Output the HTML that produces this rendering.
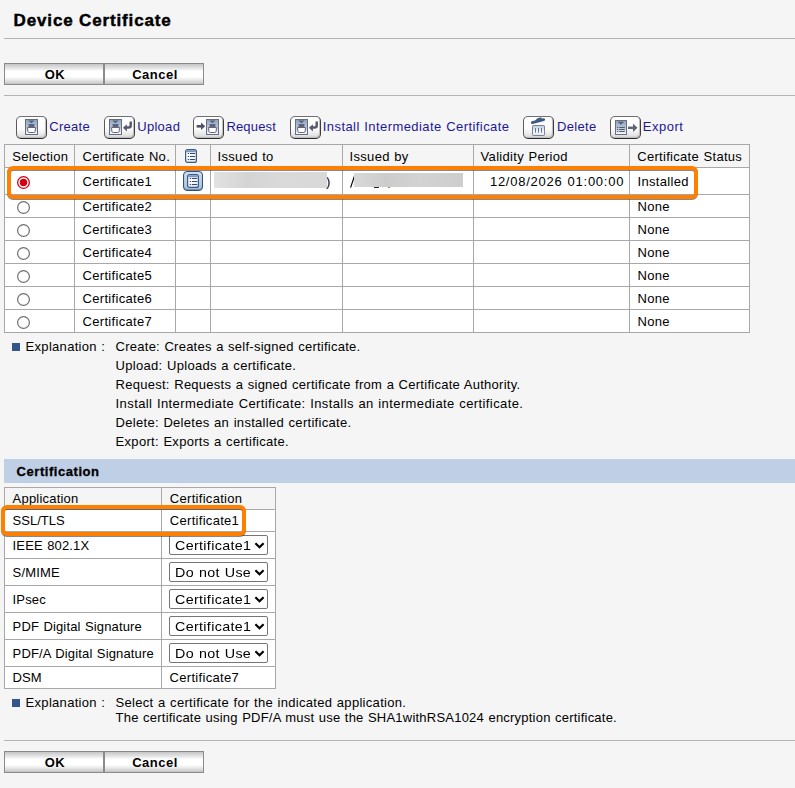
<!DOCTYPE html>
<html><head><meta charset="utf-8"><title>Device Certificate</title><style>
html,body{margin:0;padding:0;}
body{width:795px;height:788px;overflow:hidden;background:#f5f5f5;position:relative;font-family:"Liberation Sans", sans-serif;}
.t{position:absolute;white-space:nowrap;font-family:"Liberation Sans", sans-serif;}
.ic{position:absolute;overflow:visible}
.btn{position:absolute;width:98px;padding-top:1px;height:19px;text-indent:2px;border:1px solid #8a8a8a;background:linear-gradient(#c6c6c6 0%,#e6e6e6 22%,#fff 36%,#fff 64%,#e8e8e8 80%,#c4c4c4 100%);font-weight:bold;font-size:13px;line-height:20px;text-align:center;color:#000;letter-spacing:0.5px;box-sizing:content-box}
.tb{position:absolute;width:29px;height:21px;border:1px solid #555;border-color:#707070 #3c3c3c #2a2a2a #5a5a5a;border-radius:5px;background:linear-gradient(#ffffff 0%,#fdfdfd 55%,#e6e6e6 85%,#cfcfcf 100%);box-shadow:inset -1px -1px 1px #bdbdbd}
.lbtn{position:absolute;width:18px;height:18px;border:1px solid #34507c;border-radius:4px;background:linear-gradient(#cfdff0,#a9c2dc);box-shadow:inset 0 -1px 1px #6d88ad}
.radio{position:absolute;width:11px;height:11px;border:1px solid #767676;border-radius:50%;background:#fff}
.radio.sel{border-color:#d0021b;}
.radio.sel::after{content:"";position:absolute;left:2px;top:2px;width:7px;height:7px;border-radius:50%;background:#d0021b}
.hl{position:absolute;border:4px solid #ff8000;border-radius:6px;filter:drop-shadow(0 1px 0 rgba(50,60,70,0.6))}
.sel2{position:absolute;width:97px;height:18px;border:1px solid #767676;border-radius:2px;background:#fff}
</style></head><body><svg width="0" height="0" style="position:absolute"><defs>
<linearGradient id="gdoc" x1="0" y1="0" x2="0" y2="1"><stop offset="0" stop-color="#8aa3c0"/><stop offset="0.55" stop-color="#b9c9dc"/><stop offset="1" stop-color="#ffffff"/></linearGradient>
<linearGradient id="glist" x1="0" y1="0" x2="0" y2="1"><stop offset="0" stop-color="#ffffff"/><stop offset="0.7" stop-color="#f4f6fa"/><stop offset="1" stop-color="#dfe5ee"/></linearGradient>
<linearGradient id="gdel" x1="0" y1="0" x2="0" y2="1"><stop offset="0" stop-color="#b8cce4"/><stop offset="0.6" stop-color="#f4f8fc"/><stop offset="1" stop-color="#dde6f2"/></linearGradient>
</defs></svg>
<div class="t" style="left:13.6px;top:13px;font-size:17px;line-height:16px;color:#000;font-weight:bold;letter-spacing:0.85px;-webkit-text-stroke:0.45px #000;">Device Certificate</div>
<div style="position:absolute;left:4px;top:38px;width:791px;height:1px;background:#b4b4b4"></div>
<div class="btn" style="left:4px;top:63px;">OK</div>
<div class="btn" style="left:104px;top:63px;">Cancel</div>
<div style="position:absolute;left:4px;top:95px;width:791px;height:1px;background:#b4b4b4"></div>
<div class="tb" style="left:16px;top:116px"></div>
<svg class="ic" style="left:25px;top:119px" width="13" height="16"><rect x="0.5" y="0.5" width="12" height="15" fill="url(#gdoc)" stroke="#676c82"/>
<path d="M3.2 1.6H9.6L6.4 4.3z" fill="#5a5f74"/>
<rect x="3.6" y="5" width="5.8" height="3.2" fill="#5f6479"/>
<path d="M2.5 8.5H10.5L10.1 12.4Q9.9 13.5 8.8 13.5H4.2Q3.1 13.5 2.9 12.4Z" fill="#fff" stroke="#62677c"/></svg>
<div class="t" style="left:49.2px;top:119px;font-size:13px;line-height:16px;color:#1e1896;letter-spacing:0.3px;word-spacing:0.6px;">Create</div>
<div class="tb" style="left:104px;top:116px"></div>
<svg class="ic" style="left:109px;top:119px" width="24" height="16"><rect x="0.5" y="0.5" width="12" height="15" fill="url(#gdoc)" stroke="#676c82"/>
<path d="M3.2 1.6H9.6L6.4 4.3z" fill="#5a5f74"/>
<rect x="3.6" y="5" width="5.8" height="3.2" fill="#5f6479"/>
<path d="M2.5 8.5H10.5L10.1 12.4Q9.9 13.5 8.8 13.5H4.2Q3.1 13.5 2.9 12.4Z" fill="#fff" stroke="#62677c"/>
<path d="M21.7 3.4V6.6Q21.7 8.6 19.7 8.6H17" fill="none" stroke="#555a70" stroke-width="2.5" stroke-linecap="round"/>
<path d="M13.9 8.8L17.9 5.2V12.5Z" fill="#555a70"/></svg>
<div class="t" style="left:137.2px;top:119px;font-size:13px;line-height:16px;color:#1e1896;letter-spacing:0.3px;word-spacing:0.6px;">Upload</div>
<div class="tb" style="left:193px;top:116px"></div>
<svg class="ic" style="left:196px;top:119px" width="24" height="16">
<path d="M0.6 7.3H5.8" stroke="#4e5268" stroke-width="2.6"/><path d="M5 3.6L9.2 7.3L5 11Z" fill="#4e5268"/>
<g transform="translate(10,0)"><rect x="0.5" y="0.5" width="12" height="15" fill="url(#gdoc)" stroke="#676c82"/>
<path d="M3.2 1.6H9.6L6.4 4.3z" fill="#5a5f74"/>
<rect x="3.6" y="5" width="5.8" height="3.2" fill="#5f6479"/>
<path d="M2.5 8.5H10.5L10.1 12.4Q9.9 13.5 8.8 13.5H4.2Q3.1 13.5 2.9 12.4Z" fill="#fff" stroke="#62677c"/></g></svg>
<div class="t" style="left:226.4px;top:119px;font-size:13px;line-height:16px;color:#1e1896;letter-spacing:0.18px;word-spacing:0.6px;">Request</div>
<div class="tb" style="left:290px;top:116px"></div>
<svg class="ic" style="left:295px;top:119px" width="24" height="16"><rect x="0.5" y="0.5" width="12" height="15" fill="url(#gdoc)" stroke="#676c82"/>
<path d="M3.2 1.6H9.6L6.4 4.3z" fill="#5a5f74"/>
<rect x="3.6" y="5" width="5.8" height="3.2" fill="#5f6479"/>
<path d="M2.5 8.5H10.5L10.1 12.4Q9.9 13.5 8.8 13.5H4.2Q3.1 13.5 2.9 12.4Z" fill="#fff" stroke="#62677c"/>
<path d="M21.7 3.4V6.6Q21.7 8.6 19.7 8.6H17" fill="none" stroke="#555a70" stroke-width="2.5" stroke-linecap="round"/>
<path d="M13.9 8.8L17.9 5.2V12.5Z" fill="#555a70"/></svg>
<div class="t" style="left:322.8px;top:119px;font-size:13px;line-height:16px;color:#1e1896;letter-spacing:0.42px;word-spacing:0.6px;">Install Intermediate Certificate</div>
<div class="tb" style="left:523px;top:116px"></div>
<svg class="ic" style="left:531px;top:117px" width="16" height="20">
<path d="M1.3 5.6 L12.7 2.6" stroke="#3e5a84" stroke-width="2.8" stroke-linecap="round" fill="none"/>
<path d="M5.5 3.6 Q7 1.2 9.8 1.6" stroke="#3e5a84" stroke-width="2" stroke-linecap="round" fill="none"/>
<rect x="1.5" y="8.5" width="12" height="10" rx="0.8" fill="url(#gdel)" stroke="#7e7f94"/>
<path d="M4.5 11v4.6M7.5 11v4.6M10.5 11v4.6" stroke="#6e7084" stroke-width="1"/></svg>
<div class="t" style="left:557.1px;top:119px;font-size:13px;line-height:16px;color:#1e1896;letter-spacing:0.3px;word-spacing:0.6px;">Delete</div>
<div class="tb" style="left:610px;top:116px"></div>
<svg class="ic" style="left:615px;top:120px" width="24" height="16">
<rect x="0.5" y="0.5" width="11" height="14" fill="url(#gdoc)" stroke="#696e84"/>
<path d="M2.6 1.8h6.6l-3.3 3z" fill="#5a5f74"/>
<path d="M2 7.5h1.3M2 9.5h1.3M2 11.5h1.3" stroke="#55596e" stroke-width="1.1"/>
<path d="M4.2 7.5h5.6M4.2 9.5h5.6M4.2 11.5h5.6" stroke="#55596e" stroke-width="1.1"/>
<path d="M13 7.8h6" stroke="#5e6378" stroke-width="2.4"/><path d="M18 3.5l4.5 4.3-4.5 4.3z" fill="#5e6378"/></svg>
<div class="t" style="left:642.8000000000001px;top:119px;font-size:13px;line-height:16px;color:#1e1896;letter-spacing:0.5px;word-spacing:0.6px;">Export</div>
<div style="position:absolute;left:4px;top:144px;width:746px;height:23px;background:#f5f5f5"></div>
<div style="position:absolute;left:4px;top:167px;width:746px;height:165px;background:#fff"></div>
<div style="position:absolute;left:4px;top:144px;width:1px;height:189px;background:#a8a8a8"></div>
<div style="position:absolute;left:74px;top:144px;width:1px;height:189px;background:#a8a8a8"></div>
<div style="position:absolute;left:175px;top:144px;width:1px;height:189px;background:#a8a8a8"></div>
<div style="position:absolute;left:210px;top:144px;width:1px;height:189px;background:#a8a8a8"></div>
<div style="position:absolute;left:342px;top:144px;width:1px;height:189px;background:#a8a8a8"></div>
<div style="position:absolute;left:473px;top:144px;width:1px;height:189px;background:#a8a8a8"></div>
<div style="position:absolute;left:629px;top:144px;width:1px;height:189px;background:#a8a8a8"></div>
<div style="position:absolute;left:749px;top:144px;width:1px;height:189px;background:#a8a8a8"></div>
<div style="position:absolute;left:4px;top:144px;width:746px;height:1px;background:#a8a8a8"></div>
<div style="position:absolute;left:4px;top:167px;width:746px;height:1px;background:#a8a8a8"></div>
<div style="position:absolute;left:4px;top:194px;width:746px;height:1px;background:#a8a8a8"></div>
<div style="position:absolute;left:4px;top:217px;width:746px;height:1px;background:#a8a8a8"></div>
<div style="position:absolute;left:4px;top:240px;width:746px;height:1px;background:#a8a8a8"></div>
<div style="position:absolute;left:4px;top:263px;width:746px;height:1px;background:#a8a8a8"></div>
<div style="position:absolute;left:4px;top:286px;width:746px;height:1px;background:#a8a8a8"></div>
<div style="position:absolute;left:4px;top:309px;width:746px;height:1px;background:#a8a8a8"></div>
<div style="position:absolute;left:4px;top:332px;width:746px;height:1px;background:#a8a8a8"></div>
<div class="t" style="left:12.2px;top:149px;font-size:13px;line-height:16px;color:#000;letter-spacing:0.3px;word-spacing:0.6px;">Selection</div>
<div class="t" style="left:82.6px;top:149px;font-size:13px;line-height:16px;color:#000;letter-spacing:0.3px;word-spacing:0.6px;">Certificate No.</div>
<div class="t" style="left:217.6px;top:149px;font-size:13px;line-height:16px;color:#000;letter-spacing:0.3px;word-spacing:0.6px;">Issued to</div>
<div class="t" style="left:349.6px;top:149px;font-size:13px;line-height:16px;color:#000;letter-spacing:0.3px;word-spacing:0.6px;">Issued by</div>
<div class="t" style="left:480.6px;top:149px;font-size:13px;line-height:16px;color:#000;letter-spacing:0.3px;word-spacing:0.6px;">Validity Period</div>
<div class="t" style="left:637.2px;top:149px;font-size:13px;line-height:16px;color:#000;letter-spacing:0.3px;word-spacing:0.6px;">Certificate Status</div>
<svg class="ic" style="left:185px;top:149px" width="12" height="14"><rect x="0.6" y="0.6" width="10.8" height="12.8" rx="2" fill="url(#glist)" stroke="#3b5a8a" stroke-width="1.2"/>
<path d="M1.2 3.2V2.4Q1.2 1.2 2.4 1.2H9.6Q10.8 1.2 10.8 2.4V3.2Z" fill="#7d94b8"/>
<path d="M2.8 4.5h1.3M2.8 7.5h1.3M2.8 10.5h1.3" stroke="#2f4c7c" stroke-width="1.2"/>
<path d="M5 4.5h5.2M5 7.5h5.2M5 10.5h5.2" stroke="#2f4c7c" stroke-width="1.2"/></svg>
<svg class="ic" style="left:17px;top:176px" width="13" height="13"><circle cx="6.5" cy="6.5" r="5.85" fill="#fff" stroke="#d20014" stroke-width="1.3"/><circle cx="6.5" cy="6.5" r="3.7" fill="#d20014"/></svg>
<div class="t" style="left:82.6px;top:174px;font-size:13px;line-height:16px;color:#000;letter-spacing:0.3px;word-spacing:0.6px;">Certificate1</div>
<div class="lbtn" style="left:183px;top:171px"></div>
<svg class="ic" style="left:187px;top:174px" width="12" height="14"><rect x="0.6" y="0.6" width="10.8" height="12.8" rx="2" fill="url(#glist)" stroke="#3b5a8a" stroke-width="1.2"/>
<path d="M1.2 3.2V2.4Q1.2 1.2 2.4 1.2H9.6Q10.8 1.2 10.8 2.4V3.2Z" fill="#7d94b8"/>
<path d="M2.8 4.5h1.3M2.8 7.5h1.3M2.8 10.5h1.3" stroke="#2f4c7c" stroke-width="1.2"/>
<path d="M5 4.5h5.2M5 7.5h5.2M5 10.5h5.2" stroke="#2f4c7c" stroke-width="1.2"/></svg>
<div class="t" style="left:326.1px;top:174px;font-size:13px;line-height:16px;color:#000;letter-spacing:0.3px;word-spacing:0.6px;">)</div>
<div style="position:absolute;left:214px;top:172px;width:113px;height:16px;background:linear-gradient(90deg,#e2e2e2,#d4d4d4 30%,#dadada 60%,#d8d8d8)"></div>
<svg class="ic" style="left:349px;top:175px" width="8" height="14"><path d="M1.6 12.6L5.4 1.2" stroke="#000" stroke-width="1.15"/></svg>
<div style="position:absolute;left:374px;top:187px;width:5px;height:1px;background:#222"></div>
<div style="position:absolute;left:388px;top:187px;width:2px;height:1px;background:#c87a3a"></div>
<div style="position:absolute;left:354px;top:173px;width:109px;height:14px;background:linear-gradient(90deg,#d9d9d9,#cccccc 30%,#d3d3d3 60%,#cdcdcd)"></div>
<div class="t" style="left:489.90000000000003px;top:174px;font-size:13px;line-height:16px;color:#000;letter-spacing:0.76px;word-spacing:0.6px;">12/08/2026 01:00:00</div>
<div class="t" style="left:637.6px;top:174px;font-size:13px;line-height:16px;color:#000;letter-spacing:0.3px;word-spacing:0.6px;">Installed</div>
<svg class="ic" style="left:17px;top:201px" width="13" height="13"><circle cx="6.5" cy="6.5" r="5.9" fill="#fff" stroke="#6f6f6f" stroke-width="1.2"/></svg>
<div class="t" style="left:82.6px;top:199px;font-size:13px;line-height:16px;color:#000;letter-spacing:0.3px;word-spacing:0.6px;">Certificate2</div>
<div class="t" style="left:637.6px;top:199px;font-size:13px;line-height:16px;color:#000;letter-spacing:0.3px;word-spacing:0.6px;">None</div>
<svg class="ic" style="left:17px;top:224px" width="13" height="13"><circle cx="6.5" cy="6.5" r="5.9" fill="#fff" stroke="#6f6f6f" stroke-width="1.2"/></svg>
<div class="t" style="left:82.6px;top:222px;font-size:13px;line-height:16px;color:#000;letter-spacing:0.3px;word-spacing:0.6px;">Certificate3</div>
<div class="t" style="left:637.6px;top:222px;font-size:13px;line-height:16px;color:#000;letter-spacing:0.3px;word-spacing:0.6px;">None</div>
<svg class="ic" style="left:17px;top:247px" width="13" height="13"><circle cx="6.5" cy="6.5" r="5.9" fill="#fff" stroke="#6f6f6f" stroke-width="1.2"/></svg>
<div class="t" style="left:82.6px;top:245px;font-size:13px;line-height:16px;color:#000;letter-spacing:0.3px;word-spacing:0.6px;">Certificate4</div>
<div class="t" style="left:637.6px;top:245px;font-size:13px;line-height:16px;color:#000;letter-spacing:0.3px;word-spacing:0.6px;">None</div>
<svg class="ic" style="left:17px;top:270px" width="13" height="13"><circle cx="6.5" cy="6.5" r="5.9" fill="#fff" stroke="#6f6f6f" stroke-width="1.2"/></svg>
<div class="t" style="left:82.6px;top:268px;font-size:13px;line-height:16px;color:#000;letter-spacing:0.3px;word-spacing:0.6px;">Certificate5</div>
<div class="t" style="left:637.6px;top:268px;font-size:13px;line-height:16px;color:#000;letter-spacing:0.3px;word-spacing:0.6px;">None</div>
<svg class="ic" style="left:17px;top:293px" width="13" height="13"><circle cx="6.5" cy="6.5" r="5.9" fill="#fff" stroke="#6f6f6f" stroke-width="1.2"/></svg>
<div class="t" style="left:82.6px;top:291px;font-size:13px;line-height:16px;color:#000;letter-spacing:0.3px;word-spacing:0.6px;">Certificate6</div>
<div class="t" style="left:637.6px;top:291px;font-size:13px;line-height:16px;color:#000;letter-spacing:0.3px;word-spacing:0.6px;">None</div>
<svg class="ic" style="left:17px;top:316px" width="13" height="13"><circle cx="6.5" cy="6.5" r="5.9" fill="#fff" stroke="#6f6f6f" stroke-width="1.2"/></svg>
<div class="t" style="left:82.6px;top:314px;font-size:13px;line-height:16px;color:#000;letter-spacing:0.3px;word-spacing:0.6px;">Certificate7</div>
<div class="t" style="left:637.6px;top:314px;font-size:13px;line-height:16px;color:#000;letter-spacing:0.3px;word-spacing:0.6px;">None</div>
<div class="hl" style="left:7px;top:166px;width:683px;height:25px"></div>
<div style="position:absolute;left:12px;top:343px;width:8px;height:8px;background:#34548c"></div>
<div class="t" style="left:25.6px;top:339px;font-size:13px;line-height:16px;color:#000;letter-spacing:0.3px;word-spacing:0.6px;">Explanation :</div>
<div class="t" style="left:115.6px;top:339px;font-size:13px;line-height:16px;color:#000;letter-spacing:0.25px;word-spacing:0.6px;">Create: Creates a self-signed certificate.</div>
<div class="t" style="left:115.6px;top:358px;font-size:13px;line-height:16px;color:#000;letter-spacing:0.3px;word-spacing:0.6px;">Upload: Uploads a certificate.</div>
<div class="t" style="left:115.6px;top:377px;font-size:13px;line-height:16px;color:#000;letter-spacing:0.265px;word-spacing:0.6px;">Request: Requests a signed certificate from a Certificate Authority.</div>
<div class="t" style="left:115.6px;top:396px;font-size:13px;line-height:16px;color:#000;letter-spacing:0.4px;word-spacing:0.6px;">Install Intermediate Certificate: Installs an intermediate certificate.</div>
<div class="t" style="left:115.6px;top:415px;font-size:13px;line-height:16px;color:#000;letter-spacing:0.3px;word-spacing:0.6px;">Delete: Deletes an installed certificate.</div>
<div class="t" style="left:115.6px;top:434px;font-size:13px;line-height:16px;color:#000;letter-spacing:0.3px;word-spacing:0.6px;">Export: Exports a certificate.</div>
<div style="position:absolute;left:4px;top:459px;width:791px;height:24px;background:#bfcfe5"></div>
<div class="t" style="left:16.6px;top:464px;font-size:13px;line-height:16px;color:#000;font-weight:bold;letter-spacing:0.55px;-webkit-text-stroke:0.3px #000;">Certification</div>
<div style="position:absolute;left:4px;top:487px;width:272px;height:22px;background:#f5f5f5"></div>
<div style="position:absolute;left:4px;top:509px;width:272px;height:179px;background:#fff"></div>
<div style="position:absolute;left:4px;top:487px;width:1px;height:202px;background:#a8a8a8"></div>
<div style="position:absolute;left:161px;top:487px;width:1px;height:202px;background:#a8a8a8"></div>
<div style="position:absolute;left:275px;top:487px;width:1px;height:202px;background:#a8a8a8"></div>
<div style="position:absolute;left:4px;top:487px;width:272px;height:1px;background:#a8a8a8"></div>
<div style="position:absolute;left:4px;top:509px;width:272px;height:1px;background:#a8a8a8"></div>
<div style="position:absolute;left:4px;top:531px;width:272px;height:1px;background:#a8a8a8"></div>
<div style="position:absolute;left:4px;top:558px;width:272px;height:1px;background:#a8a8a8"></div>
<div style="position:absolute;left:4px;top:585px;width:272px;height:1px;background:#a8a8a8"></div>
<div style="position:absolute;left:4px;top:612px;width:272px;height:1px;background:#a8a8a8"></div>
<div style="position:absolute;left:4px;top:639px;width:272px;height:1px;background:#a8a8a8"></div>
<div style="position:absolute;left:4px;top:666px;width:272px;height:1px;background:#a8a8a8"></div>
<div style="position:absolute;left:4px;top:688px;width:272px;height:1px;background:#a8a8a8"></div>
<div class="t" style="left:12.6px;top:491px;font-size:13px;line-height:16px;color:#000;letter-spacing:0.2px;word-spacing:0.6px;">Application</div>
<div class="t" style="left:169.79999999999998px;top:491px;font-size:13px;line-height:16px;color:#000;letter-spacing:0.3px;word-spacing:0.6px;">Certification</div>
<div class="t" style="left:12.6px;top:513px;font-size:13px;line-height:16px;color:#000;letter-spacing:0.0px;word-spacing:0.6px;">SSL/TLS</div>
<div class="t" style="left:169.79999999999998px;top:513px;font-size:13px;line-height:16px;color:#000;letter-spacing:0.3px;word-spacing:0.6px;">Certificate1</div>
<div class="t" style="left:12.6px;top:538px;font-size:13px;line-height:16px;color:#000;letter-spacing:0.15px;word-spacing:0.6px;">IEEE 802.1X</div>
<div class="sel2" style="left:169px;top:535px"></div>
<div class="t" style="left:174.7px;top:538px;font-size:13px;line-height:16px;color:#000;letter-spacing:0.3px;word-spacing:0.6px;transform:scaleX(1.1);transform-origin:0 0;">Certificate1</div>
<svg class="ic" style="left:255px;top:542px" width="10" height="7"><path d="M0.4 1.3l4.1 3.9 4.1-3.9" fill="none" stroke="#000" stroke-width="2.2"/></svg>
<div class="t" style="left:12.6px;top:565px;font-size:13px;line-height:16px;color:#000;letter-spacing:0.15px;word-spacing:0.6px;">S/MIME</div>
<div class="sel2" style="left:169px;top:562px"></div>
<div class="t" style="left:174.7px;top:565px;font-size:13px;line-height:16px;color:#000;letter-spacing:0.3px;word-spacing:0.6px;transform:scaleX(1.1);transform-origin:0 0;">Do not Use</div>
<svg class="ic" style="left:255px;top:569px" width="10" height="7"><path d="M0.4 1.3l4.1 3.9 4.1-3.9" fill="none" stroke="#000" stroke-width="2.2"/></svg>
<div class="t" style="left:12.6px;top:592px;font-size:13px;line-height:16px;color:#000;letter-spacing:0.15px;word-spacing:0.6px;">IPsec</div>
<div class="sel2" style="left:169px;top:589px"></div>
<div class="t" style="left:174.7px;top:592px;font-size:13px;line-height:16px;color:#000;letter-spacing:0.3px;word-spacing:0.6px;transform:scaleX(1.1);transform-origin:0 0;">Certificate1</div>
<svg class="ic" style="left:255px;top:596px" width="10" height="7"><path d="M0.4 1.3l4.1 3.9 4.1-3.9" fill="none" stroke="#000" stroke-width="2.2"/></svg>
<div class="t" style="left:12.6px;top:619px;font-size:13px;line-height:16px;color:#000;letter-spacing:0.15px;word-spacing:0.6px;">PDF Digital Signature</div>
<div class="sel2" style="left:169px;top:616px"></div>
<div class="t" style="left:174.7px;top:619px;font-size:13px;line-height:16px;color:#000;letter-spacing:0.3px;word-spacing:0.6px;transform:scaleX(1.1);transform-origin:0 0;">Certificate1</div>
<svg class="ic" style="left:255px;top:623px" width="10" height="7"><path d="M0.4 1.3l4.1 3.9 4.1-3.9" fill="none" stroke="#000" stroke-width="2.2"/></svg>
<div class="t" style="left:12.6px;top:646px;font-size:13px;line-height:16px;color:#000;letter-spacing:0.15px;word-spacing:0.6px;">PDF/A Digital Signature</div>
<div class="sel2" style="left:169px;top:643px"></div>
<div class="t" style="left:174.7px;top:646px;font-size:13px;line-height:16px;color:#000;letter-spacing:0.3px;word-spacing:0.6px;transform:scaleX(1.1);transform-origin:0 0;">Do not Use</div>
<svg class="ic" style="left:255px;top:650px" width="10" height="7"><path d="M0.4 1.3l4.1 3.9 4.1-3.9" fill="none" stroke="#000" stroke-width="2.2"/></svg>
<div class="t" style="left:12.6px;top:670px;font-size:13px;line-height:16px;color:#000;letter-spacing:0.0px;word-spacing:0.6px;">DSM</div>
<div class="t" style="left:169.6px;top:670px;font-size:13px;line-height:16px;color:#000;letter-spacing:0.3px;word-spacing:0.6px;">Certificate7</div>
<div class="hl" style="left:1px;top:505px;width:236.5px;height:23px"></div>
<div style="position:absolute;left:12px;top:699px;width:8px;height:8px;background:#34548c"></div>
<div class="t" style="left:25.6px;top:695px;font-size:13px;line-height:16px;color:#000;letter-spacing:0.3px;word-spacing:0.6px;">Explanation :</div>
<div class="t" style="left:115.6px;top:695px;font-size:13px;line-height:16px;color:#000;letter-spacing:0.3px;word-spacing:0.6px;">Select a certificate for the indicated application.</div>
<div class="t" style="left:115.6px;top:710px;font-size:13px;line-height:16px;color:#000;letter-spacing:0.22px;word-spacing:0.6px;">The certificate using PDF/A must use the SHA1withRSA1024 encryption certificate.</div>
<div style="position:absolute;left:4px;top:740px;width:791px;height:1px;background:#b4b4b4"></div>
<div class="btn" style="left:4px;top:751px;">OK</div>
<div class="btn" style="left:104px;top:751px;">Cancel</div>
</body></html>
